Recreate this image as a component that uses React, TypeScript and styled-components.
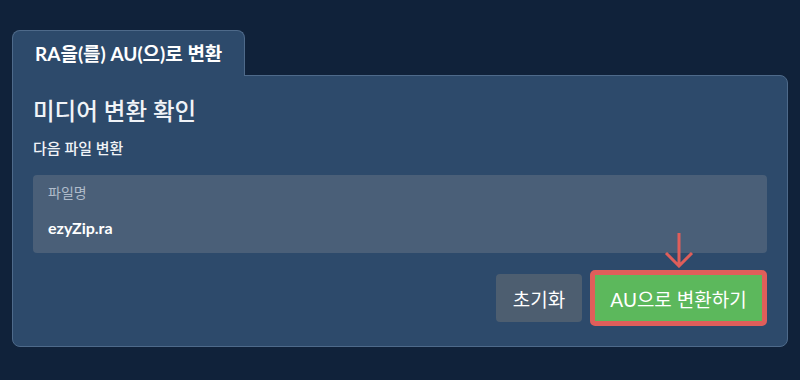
import React from 'react';
import styled, { createGlobalStyle } from 'styled-components';

const GlobalStyle = createGlobalStyle`
  html, body {
    margin: 0;
    padding: 0;
    background: #10223a;
  }
  body {
    font-family: Lato, 'Noto Sans CJK KR', sans-serif;
    color: #fff;
  }
`;

const Page = styled.div`
  width: 800px;
  height: 380px;
  box-sizing: border-box;
  padding: 30px 12px 0 12px;
`;

const Tab = styled.div`
  position: relative;
  z-index: 1;
  width: 233px;
  height: 46px;
  box-sizing: border-box;
  margin-bottom: -1px;
  padding: 0 0 2px 22px;
  display: flex;
  align-items: center;
  background: #2d4a6b;
  border: 1px solid #4e6a8a;
  border-bottom: none;
  border-radius: 8px 8px 0 0;
  font-size: 19px;
  font-weight: 700;
  white-space: nowrap;
`;

const Card = styled.div`
  width: 776px;
  height: 272px;
  box-sizing: border-box;
  padding: 18px 20px 20px 20px;
  background: #2d4a6b;
  border: 1px solid #4e6a8a;
  border-radius: 0 8px 8px 8px;
  display: flex;
  flex-direction: column;
`;

const Heading = styled.h2`
  margin: 0;
  font-size: 23.5px;
  font-weight: 500;
  line-height: 34px;
  color: #f0f3f7;
`;

const Sub = styled.div`
  margin-top: 10px;
  font-size: 15px;
  font-weight: 500;
  line-height: 20px;
  color: #f0f3f7;
`;

const FileBox = styled.div`
  margin-top: 17px;
  height: 78px;
  box-sizing: border-box;
  padding: 9px 15px 8px 15px;
  background: #4a5f78;
  border-radius: 4px;
  display: flex;
  flex-direction: column;
`;

const Label = styled.div`
  font-size: 14px;
  line-height: 18px;
  color: #b0bccb;
`;

const Value = styled.div`
  margin-top: 16px;
  font-size: 16px;
  font-weight: 700;
  line-height: 20px;
  color: #fff;
`;

const Actions = styled.div`
  margin-top: 17px;
  display: flex;
  justify-content: flex-end;
  align-items: center;
  gap: 8px;
`;

const ResetButton = styled.button`
  width: 86px;
  height: 48px;
  border: none;
  border-radius: 4px;
  background: #4d5e70;
  color: #fff;
  font-family: Lato, 'Noto Sans CJK KR', sans-serif;
  font-size: 19px;
  padding: 0;
`;

const ConvertWrap = styled.div`
  position: relative;
`;

const ConvertButton = styled.button`
  width: 177px;
  height: 56px;
  box-sizing: border-box;
  border: 5px solid #df5e5a;
  border-radius: 5px;
  background: #5cb85c;
  color: #fff;
  font-family: Lato, 'Noto Sans CJK KR', sans-serif;
  font-size: 19px;
  padding: 0;
  white-space: nowrap;
`;

const Arrow = styled.svg`
  position: absolute;
  left: 74px;
  top: -38px;
`;

export default function App() {
  return (
    <>
      <GlobalStyle />
      <Page>
        <Tab>RA을(를) AU(으)로 변환</Tab>
        <Card>
          <Heading>미디어 변환 확인</Heading>
          <Sub>다음 파일 변환</Sub>
          <FileBox>
            <Label>파일명</Label>
            <Value>ezyZip.ra</Value>
          </FileBox>
          <Actions>
            <ResetButton>초기화</ResetButton>
            <ConvertWrap>
              <ConvertButton>AU으로 변환하기</ConvertButton>
              <Arrow width="30" height="36" viewBox="0 0 30 36">
                <path
                  d="M15 1 V34 M2 21 L15 34 L28 21"
                  fill="none"
                  stroke="#df5e5a"
                  strokeWidth="3"
                />
              </Arrow>
            </ConvertWrap>
          </Actions>
        </Card>
      </Page>
    </>
  );
}
